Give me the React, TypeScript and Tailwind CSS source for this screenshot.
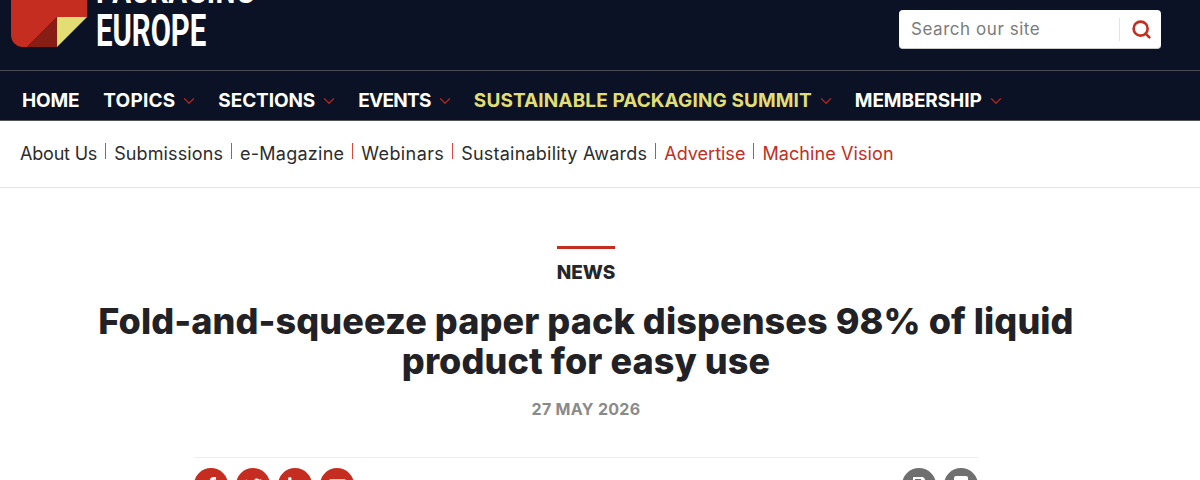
import { ChevronDown, Search } from 'lucide-react';
import { FaFacebookF, FaTwitter, FaLinkedinIn, FaEnvelope, FaPrint } from 'react-icons/fa';

const mainNav = [
  { label: 'HOME', track: 'tracking-[-0.2px]' },
  { label: 'TOPICS', menu: true, track: 'tracking-[0.2px]' },
  { label: 'SECTIONS', menu: true, track: 'tracking-[-0.1px]' },
  { label: 'EVENTS', menu: true, track: 'tracking-[-0.7px]' },
  { label: 'SUSTAINABLE PACKAGING SUMMIT', menu: true, accent: true, track: 'tracking-[0.1px]' },
  { label: 'MEMBERSHIP', menu: true, track: 'tracking-[-0.1px]' },
];

const subNav = [
  { label: 'About Us', track: 'tracking-[-0.2px]' },
  { label: 'Submissions', track: 'tracking-[0.12px]' },
  { label: 'e-Magazine', track: 'tracking-[0.25px]' },
  { label: 'Webinars', track: 'tracking-[0.4px]' },
  { label: 'Sustainability Awards', track: 'tracking-[0.22px]' },
  { label: 'Advertise', red: true, track: 'tracking-[0px]' },
  { label: 'Machine Vision', red: true, track: 'tracking-[0.1px]' },
];

const shareIcons = [FaFacebookF, FaTwitter, FaLinkedinIn, FaEnvelope];

const App = () => {
  return (
    <div className="h-[480px] w-[1200px] overflow-hidden bg-white font-['Inter',sans-serif]">
      {/* Top bar */}
      <header className="flex h-[71px] items-start justify-between overflow-hidden border-b border-[#4a4c55] bg-[#0c1226] pl-[11px] pr-[39px]">
        <div className="flex items-start gap-[9px]">
          <svg width="76" height="47" viewBox="0 0 76 47" className="shrink-0">
            <path d="M0 0H76V17H46L16 47H12A12 12 0 0 1 0 35Z" fill="#c42d20" />
            <path d="M16 47L46 17V47Z" fill="#871d15" />
            <path d="M46 17H76L46 47Z" fill="#e2de74" />
          </svg>
          <div className="mt-[-27px] font-['Roboto',sans-serif] font-bold text-white">
            <div className="h-[27px] w-[158px] text-[36px] leading-[36px] tracking-[0.5px]">
              <span className="inline-block origin-left scale-x-[0.78] whitespace-nowrap">PACKAGING</span>
            </div>
            <div className="mt-[11px] h-[36px] text-[45px] leading-[40px]">
              <span className="inline-block origin-left scale-x-[0.652] whitespace-nowrap">EUROPE</span>
            </div>
          </div>
        </div>
        <div className="mt-[10px] flex h-[39px] w-[262px] items-center rounded-[4px] border-b border-[#c9c9cc] bg-white pl-3 pr-[9px]">
          <span className="flex-1 pt-[1px] text-[17px] tracking-[0.55px] text-[#7b7b7b]">Search our site</span>
          <div className="mr-[11px] h-[23px] w-px bg-[#e2e2e2]" />
          <Search className="h-[21px] w-[21px] text-[#c42d20]" strokeWidth={3} />
        </div>
      </header>

      {/* Main navigation */}
      <nav className="flex h-[50px] items-center gap-[24px] border-b border-[#55565c] bg-[#0c1226] pl-[22px] pt-[11px] text-[19px] font-bold">
        {mainNav.map((item) => (
          <div key={item.label} className="flex items-center gap-[5px]">
            <span className={`${item.track} ${item.accent ? 'text-[#e2de74]' : 'text-white'}`}>{item.label}</span>
            {item.menu && <ChevronDown className="mr-[-4px] h-[18px] w-[18px] text-[#b3261c]" strokeWidth={1.6} />}
          </div>
        ))}
      </nav>

      {/* Secondary navigation */}
      <div className="flex h-[67px] items-center border-b border-[#e4e4e4] pb-[2px] pl-[20px] text-[18px] text-[#2c2c2c]">
        {subNav.map((item, index) => (
          <div key={item.label} className="flex items-center">
            {index > 0 && <div className="mx-[8px] mb-[4px] h-[16px] w-px bg-[#d8483c]" />}
            <span className={`${item.track} ${item.red ? 'text-[#c42d20]' : ''}`}>{item.label}</span>
          </div>
        ))}
      </div>

      {/* Article header */}
      <main className="flex w-[1172px] flex-col items-center">
        <div className="mt-[58px] h-[3px] w-[58px] bg-[#c42d20]" />
        <div className="mt-[11px] text-[19px] font-extrabold leading-[26px] text-[#26262a]">NEWS</div>
        <h1 className="mt-[15px] w-[1000px] text-center text-[36px] font-extrabold leading-[40px] tracking-[0.08px] text-[#222226]">
          Fold-and-squeeze paper pack dispenses 98% of liquid product for easy use
        </h1>
        <div className="mt-[16px] text-[16px] font-bold leading-[24px] tracking-[0.3px] text-[#8a8a8a]">27 MAY 2026</div>
        <div className="mt-[36px] w-[784px] border-t border-[#eeeeee] pt-[10px]">
          <div className="flex justify-between">
            <div className="flex gap-[8px]">
              {shareIcons.map((Icon, index) => (
                <div key={index} className="flex h-[34px] w-[34px] items-center justify-center rounded-full bg-[#c42d20] text-white">
                  <Icon className="h-[17px] w-[17px]" />
                </div>
              ))}
            </div>
            <div className="flex gap-[8px]">
              <div className="flex h-[34px] w-[34px] items-center justify-center rounded-full bg-[#6f6f6f] text-white">
                <FaPrint className="h-[16px] w-[16px]" />
              </div>
              <div className="flex h-[34px] w-[34px] items-center justify-center rounded-full bg-[#6f6f6f]">
                <svg width="14" height="18" viewBox="0 0 14 18">
                  <rect width="14" height="18" rx="2" fill="#ffffff" />
                </svg>
              </div>
            </div>
          </div>
        </div>
      </main>
    </div>
  );
};

export default App;
